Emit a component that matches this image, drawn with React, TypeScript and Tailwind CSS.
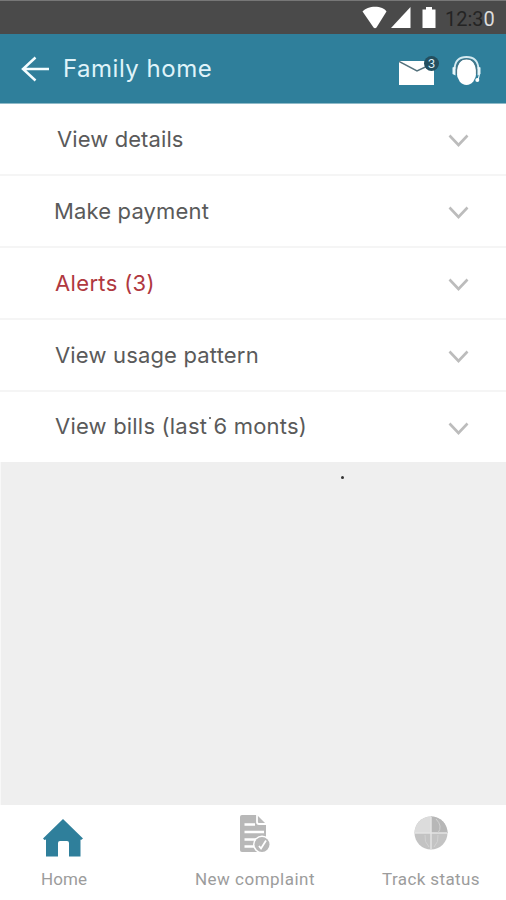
interface MenuItem {
	title: string;
	className: string;
	mark?: boolean;
}

const items: MenuItem[] = [
	{ title: "View details", className: "pl-[57px] tracking-[0.1px] text-[#5a5a5a]" },
	{ title: "Make payment", className: "pl-[54px] tracking-[0.15px] text-[#5a5a5a]" },
	{ title: "Alerts (3)", className: "pl-[55px] tracking-[0.35px] text-[#b03840]" },
	{ title: "View usage pattern", className: "pl-[55px] tracking-[0.17px] text-[#5a5a5a]" },
	{ title: "View bills (last 6 monts)", className: "pl-[55px] pb-[2px] tracking-[0.2px] text-[#5a5a5a]", mark: true },
];

const StatusBar = () => {
	return (
		<div className="h-[34px] shrink-0 bg-[#4a4a4a] border-t border-[#777] flex items-start">
			<svg className="ml-[362px] mt-[5px]" width="26" height="23" viewBox="0 0 26 23" fill="#fff">
				<path d="M0.5 5.500C3 2.500 8 .8 13 .8S23 2.500 24.500 5.500L14.500 21.500Q13 22.800 11.500 21.500Z" />
			</svg>
			<svg className="ml-[3px] mt-[6px]" width="20" height="21" viewBox="0 0 20 21" fill="#fff">
				<path d="M19.500 0V21H0Z" />
			</svg>
			<svg className="ml-[11px] mt-[6px]" width="14" height="21" viewBox="0 0 14 21" fill="#fff">
				<path d="M4 0H10V2.500H13.500V21H.5V2.500H4Z" />
			</svg>
			<span className="ml-[9px] mt-[7px] font-['Roboto',sans-serif] text-[20px] leading-[22px] text-[#242424] whitespace-nowrap">
				12:3<span className="text-[#ddd]">0</span>
			</span>
		</div>
	);
};

const Header = () => {
	return (
		<header className="h-[70px] shrink-0 bg-[#2f7f9b] border-b border-[#8fbac8] flex items-start text-[#dff3f9]">
			<svg className="ml-[21px] mt-[22px]" width="29" height="26" viewBox="0 0 29 26" fill="none" stroke="#f4fdff" strokeWidth="2.500">
				<path d="M28 13H2M14.500 1.500L2 13L14.500 24.500" />
			</svg>
			<h1 className="ml-[13px] mt-[20px] w-[160px] text-[24px] leading-[30px] tracking-[0.5px] whitespace-nowrap">
				Family home
			</h1>
			<div className="relative ml-[176px] mt-[20px]">
				<svg width="36" height="32" viewBox="0 0 36 32">
					<path d="M0 7H35V31H0Z" fill="#fff" />
					<path d="M0 7.500L18 17L35 9" fill="none" stroke="#55727d" strokeWidth="1.500" />
				</svg>
				<span className="absolute left-[25px] top-[2px] size-[15px] rounded-full bg-[#244f5f] text-[12px] leading-[15px] text-center">
					3
				</span>
			</div>
			<svg className="ml-[17px] mt-[21px]" width="30" height="31" viewBox="0 0 30 31">
				<ellipse cx="14.500" cy="17" rx="9.800" ry="13" fill="#fff" />
				<path d="M2.500 14C3 5 8 2 14.500 2S26 5 26.500 14" fill="none" stroke="#d5eaf0" strokeWidth="1.800" />
				<path d="M4.500 19V15C5 7 8 4 14.500 4S24 7 24.500 15V19" fill="none" stroke="#4b7383" strokeWidth="1.200" />
				<path d="M.5 12.500L3.500 11.500V20.500L.5 19ZM28.500 12.500L25.500 11.500V20.500L28.500 19Z" fill="#e8f6fa" />
				<path d="M27.500 19L26 25" stroke="#e8f6fa" strokeWidth="1.200" />
				<circle cx="25.300" cy="25" r="2" fill="#fff" />
			</svg>
		</header>
	);
};

const MenuRow = ({ title, className, mark }: MenuItem) => {
	return (
		<li className="h-[72px] last:h-[70px] border-b-2 border-[#f5f5f5] last:border-b-0 flex items-center justify-between">
			<span className={`relative text-[22px] leading-[26px] whitespace-nowrap ${className}`}>
				{title}
				{mark && <i className="absolute left-[209px] top-[4px] size-[2px] bg-[#777]" />}
			</span>
			<svg className="mr-[37px] mt-[3px]" width="21" height="13" viewBox="0 0 21 13" fill="none" stroke="#bcbcbc" strokeWidth="2.600">
				<path d="M1.500 1.500L10.500 11L19.500 1.500" />
			</svg>
		</li>
	);
};

const BottomNav = () => {
	return (
		<nav className="h-[95px] shrink-0 bg-white flex items-start font-['Roboto',sans-serif] text-[17px] leading-[20px] text-[#9c9c9c] whitespace-nowrap">
			<div className="w-[126px] flex flex-col items-center">
				<svg className="mt-[14px]" width="40" height="39" viewBox="0 0 40 39">
					<path d="M20 0L40 19.500L38 21L37.500 20.500V37.500H26V24Q26 22 24 22H17Q15 22 15 24V37.500H3V20.500L1.500 21L0 19.500Z" fill="#2f7f9b" />
				</svg>
				<span className="mt-[11px] ml-[2px] tracking-[0.1px]">Home</span>
			</div>
			<div className="w-[258px] flex flex-col items-center">
				<svg className="mt-[9px]" width="32" height="39" viewBox="0 0 32 39">
					<path d="M3 1H18L27 10V36Q27 38 25 38H3Q1 38 1 36V3Q1 1 3 1Z" fill="#b8b8b8" />
					<path d="M18 1V8Q18 10 20 10H27" fill="none" stroke="#fff" strokeWidth="1.800" />
					<path d="M5.500 10.500H16M5.500 18H25M5.500 25.500H18M5.500 32.500H15" stroke="#fff" strokeWidth="2.600" />
					<circle cx="23" cy="30.500" r="9" fill="#fff" />
					<circle cx="23" cy="30.500" r="7.500" fill="#b8b8b8" />
					<path d="M20 32L22 34.500L27 26.500" fill="none" stroke="#fff" strokeWidth="1.800" />
				</svg>
				<span className="mt-[16px] tracking-[0.5px]">New complaint</span>
			</div>
			<div className="w-[94px] flex flex-col items-center">
				<svg className="mt-[11px]" width="34" height="34" viewBox="0 0 34 34">
					<circle cx="17" cy="17" r="16.500" fill="#c3c3c3" />
					<path d="M17 17V.5A16.500 16.500 0 0 0 .5 17Z" fill="#dcdcdc" />
					<path d="M17 17V.5A16.500 16.500 0 0 1 33.500 17Z" fill="#b7b7b7" />
					<path d="M17 1V33M1 17H33" stroke="#e4e4e4" strokeWidth="1.500" />
					<path d="M22 3Q29 10 24 17M11 19Q10 26 15 31M24 19Q25 26 20 31" fill="none" stroke="#d2d2d2" />
				</svg>
				<span className="mt-[19px] tracking-[0.4px]">Track status</span>
			</div>
		</nav>
	);
};

const App = () => {
	return (
		<div className="w-[506px] h-[900px] overflow-hidden flex flex-col bg-white font-['Inter',sans-serif]">
			<StatusBar />
			<Header />
			<ul className="shrink-0">
				{items.map((item) => (
					<MenuRow key={item.title} {...item} />
				))}
			</ul>
			<main className="flex-1 bg-[#efefef] border-l border-[#f8f8f8]">
				<div className="ml-[340px] mt-[14px] size-[3px] rounded-full bg-[#333]" />
			</main>
			<BottomNav />
		</div>
	);
};

export default App;
